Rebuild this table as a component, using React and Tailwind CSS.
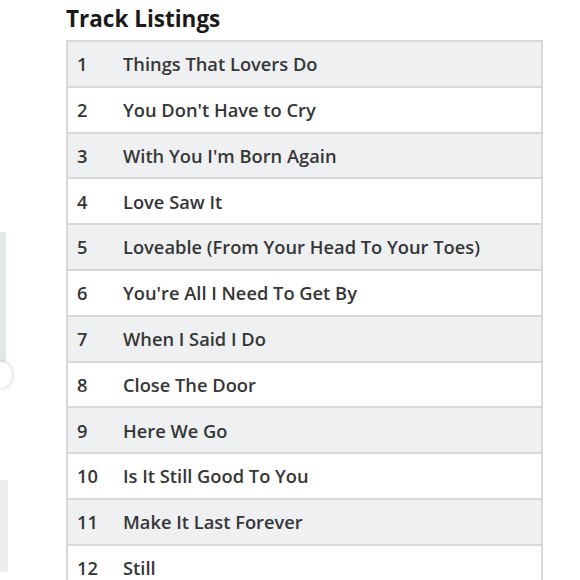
const tracks = [
  "Things That Lovers Do",
  "You Don't Have to Cry",
  "With You I'm Born Again",
  "Love Saw It",
  "Loveable (From Your Head To Your Toes)",
  "You're All I Need To Get By",
  "When I Said I Do",
  "Close The Door",
  "Here We Go",
  "Is It Still Good To You",
  "Make It Last Forever",
  "Still",
];

export default function App() {
  return (
    <main
      className="relative w-[580px] h-[580px] overflow-hidden bg-white text-[#1a1a1a] flex"
      style={{ fontFamily: '"Open Sans", "Noto Sans", Arial, sans-serif' }}
    >
      {/* restos del fondo a la izquierda */}
      <div className="w-[66px] shrink-0 flex flex-col pt-[232px]">
        <div className="w-[6px] h-[130px] bg-[#e3e8e7]" />
        <div className="w-[12px] h-[26px] rounded-r-full bg-white shadow-[0_0_4px_rgba(0,0,0,0.25)]" />
        <div className="w-[8px] h-[92px] mt-[92px] bg-[#eceeee]" />
      </div>

      <div className="pt-[5px] w-[477px]">
        <h2 className="text-[22.5px] font-bold leading-[28px] mb-[7px]">
          Track Listings
        </h2>
        <div className="border-2 border-[#d6d8da] border-b-0 text-[#363636]">
          {tracks.map((t, i) => (
            <div
              key={i}
              className={
                "flex items-center h-[45.8px] border-b-2 border-[#d6d8da] text-[18.3px] font-semibold " +
                (i % 2 === 0 ? "bg-[#eef0f2]" : "bg-white")
              }
            >
              <span className="w-[55px] pl-[9px]">{i + 1}</span>
              <span>{t}</span>
            </div>
          ))}
        </div>
      </div>
    </main>
  );
}
